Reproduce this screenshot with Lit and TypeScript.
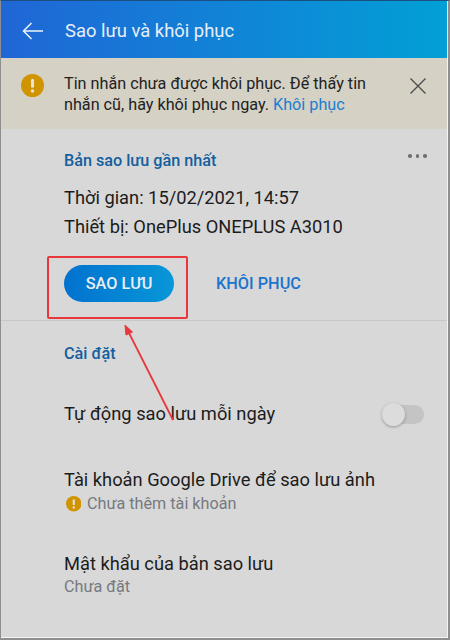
import { LitElement, html, css, svg } from "lit";
import { customElement } from "lit/decorators.js";

const warn = (cls: string) => html`<svg class=${cls} viewBox="0 0 24 24"><circle cx="12" cy="12" r="12" fill="#d09400"/><rect x="10.4" y="5" width="3.2" height="9.4" rx="1.6" fill="#e8e4d8"/><circle cx="12" cy="17.8" r="1.8" fill="#e8e4d8"/></svg>`;

@customElement("app-root")
export class AppRoot extends LitElement {
  static styles = css`
    :host { display: block; width: 450px; height: 640px; font-family: Roboto, "Noto Sans", sans-serif; }
    .screen { position: relative; width: 450px; height: 640px; box-sizing: border-box; border: 1px solid #8f8f8f; border-top-color: #1a4f80; border-right: 2px solid #8f8f8f; border-bottom: 2px solid #8f8f8f; background: #d8d8d8; overflow: hidden; display: flex; flex-direction: column; }
    .screen::after { content: ""; position: absolute; inset: 0; border-right: 1px solid #f4f4f4; border-bottom: 1px solid #f4f4f4; pointer-events: none; }
    .header { height: 57px; flex: none; display: flex; align-items: center; background: linear-gradient(90deg, #2066d6, #02a0d6); color: #e8eef5; font-size: 18.4px; font-weight: 400; padding: 2px 0 0 21px; gap: 22px; box-sizing: border-box; }
    .header svg { width: 21px; height: 18px; flex: none; }
    .banner { height: 71px; flex: none; box-sizing: border-box; background: #d5d1c5; display: flex; padding: 16px 0 0 20px; position: relative; }
    .banner .warn { width: 23px; height: 23px; flex: none; }
    .banner p { margin: -1px 0 0 20px; font-size: 16.2px; line-height: 21px; color: #222; width: 320px; }
    .banner a { color: #1a7fd0; }
    .close { width: 16px; height: 16px; position: absolute; left: 409px; top: 20px; }
    .section { padding: 0 0 0 63px; }
    .label { font-size: 16.2px; font-weight: 500; color: #135f9e; }
    .backup { position: relative; height: 192px; box-sizing: border-box; padding-top: 23px; border-bottom: 1px solid #c8c8c8; }
    .backup .label { line-height: 18px; }
    .dots { position: absolute; left: 407px; top: 25px; display: flex; gap: 4.2px; }
    .dots i { width: 3.5px; height: 3.5px; border-radius: 50%; background: #707070; }
    .info { margin-top: 13px; font-size: 18.3px; line-height: 29px; color: #1c1c1c; }
    .actions { display: flex; align-items: center; margin: 24px 0 0 0; }
    .primary { width: 110px; height: 37px; border-radius: 19px; background: linear-gradient(90deg, #0272cf, #0897d8); color: #e8eef5; display: flex; align-items: center; justify-content: center; font-size: 16.3px; font-weight: 500; }
    .secondary { margin-left: 42px; color: #1a74cc; font-size: 16.3px; font-weight: 500; }
    .settings { padding-top: 24px; }
    .settings .label { line-height: 18px; }
    .row { font-size: 18.3px; line-height: 20px; color: #1c1c1c; }
    .row.auto { margin-top: 41px; display: flex; justify-content: space-between; align-items: center; padding-right: 24px; }
    .sub { font-size: 16.2px; line-height: 18px; color: #767a80; display: flex; align-items: center; gap: 6px; margin-top: 5px; }
    .sub .warn { width: 15.5px; height: 15.5px; flex: none; margin-left: 1.5px; }
    .switch { width: 40px; height: 19px; border-radius: 10px; background: #c4c4c4; position: relative; }
    .switch i { position: absolute; left: -2px; top: -2px; width: 23px; height: 23px; border-radius: 50%; background: #dcdcdc; box-shadow: 0 1px 3px rgba(0,0,0,.3); }
    .row.drive { margin-top: 46px; }
    .row.pass { margin-top: 41px; }
    .row.pass .sub { margin-top: 4px; }
    .callout { position: absolute; left: 46px; top: 255px; width: 141px; height: 63px; box-sizing: border-box; border: 2px solid #e8383c; border-radius: 2px; }
    .arrow { position: absolute; left: 0; top: 0; width: 450px; height: 640px; pointer-events: none; }
  `;

  render() {
    return html`<div class="screen">
      <div class="header">
        <svg viewBox="0 0 21 18" fill="none" stroke="#eef3f8" stroke-width="1.5"><path d="M21 9H1.5M9.5 1L1.5 9l8 8"/></svg>
        <span>Sao lưu và khôi phục</span>
      </div>
      <div class="banner">
        ${warn("warn")}
        <p>Tin nhắn chưa được khôi phục. Để thấy tin nhắn cũ, hãy khôi phục ngay. <a>Khôi phục</a></p>
        <svg class="close" viewBox="0 0 16 16" fill="none" stroke="#4a4a4a" stroke-width="1.3"><path d="M.5.5l15 15M15.5.5l-15 15"/></svg>
      </div>
      <div class="section backup">
        <div class="label">Bản sao lưu gần nhất</div>
        <div class="dots"><i></i><i></i><i></i></div>
        <div class="info">Thời gian: 15/02/2021, 14:57<br />Thiết bị: OnePlus ONEPLUS A3010</div>
        <div class="actions"><div class="primary">SAO LƯU</div><div class="secondary">KHÔI PHỤC</div></div>
      </div>
      <div class="section settings">
        <div class="label">Cài đặt</div>
        <div class="row auto"><span>Tự động sao lưu mỗi ngày</span><div class="switch"><i></i></div></div>
        <div class="row drive">Tài khoản Google Drive để sao lưu ảnh
          <div class="sub">${warn("warn")}<span>Chưa thêm tài khoản</span></div>
        </div>
        <div class="row pass">Mật khẩu của bản sao lưu
          <div class="sub">Chưa đặt</div>
        </div>
      </div>
      <div class="callout"></div>
      <svg class="arrow" viewBox="0 0 450 640">
        ${svg`<path d="M172 419L127 330" stroke="#e8383c" stroke-width="1.8" fill="none"/><path d="M124 324L131.5 331L125 334Z" fill="#e8383c" stroke="#e8383c" stroke-width="1"/>`}
      </svg>
    </div>`;
  }
}
